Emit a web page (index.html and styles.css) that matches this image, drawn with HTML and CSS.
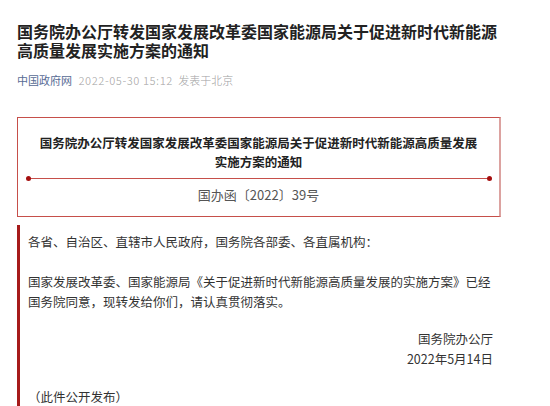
FILE: index.html
```html
<!DOCTYPE html>
<html lang="zh-CN">
<head>
  <meta charset="UTF-8">
  <meta name="viewport" content="width=device-width, initial-scale=1.0">
  <title>国务院办公厅转发国家发展改革委国家能源局关于促进新时代新能源高质量发展实施方案的通知</title>
  <link rel="stylesheet" href="styles.css">
</head>
<body>
  <!-- 文章主体 -->
  <div class="article">
    <h1 class="title">国务院办公厅转发国家发展改革委国家能源局关于促进新时代新能源高质量发展实施方案的通知</h1>

    <!-- 来源、时间、地点 -->
    <div class="meta">
      <span class="source">中国政府网</span>
      <span class="time">2022-05-30 15:12</span>
      <span class="place">发表于北京</span>
    </div>

    <!-- 红框文头 -->
    <div class="doc-head">
      <div class="doc-title">国务院办公厅转发国家发展改革委国家能源局关于促进新时代新能源高质量发展实施方案的通知</div>
      <div class="divider"></div>
      <div class="doc-num">国办函〔2022〕39号</div>
    </div>

    <!-- 正文，左侧红色竖线 -->
    <div class="doc-body">
      <p>各省、自治区、直辖市人民政府，国务院各部委、各直属机构：</p>
      <p>国家发展改革委、国家能源局《关于促进新时代新能源高质量发展的实施方案》已经国务院同意，现转发给你们，请认真贯彻落实。</p>
      <div class="sign">
        <div>国务院办公厅</div>
        <div>2022年5月14日</div>
      </div>
      <p class="note">（此件公开发布）</p>
    </div>
  </div>
</body>
</html>
```

FILE: styles.css
```css
/* 页面基础 */
body {
  margin: 0;
  background: #ffffff;
  font-family: "Noto Sans CJK SC", "Liberation Sans", sans-serif;
  color: #333333;
}

.article {
  width: 484px;
  padding-left: 17px;
}

/* 大标题 */
.title {
  margin: 22px 0 0;
  font-size: 16px;
  line-height: 19px;
  font-weight: bold;
  color: #222222;
}

/* 来源行 */
.meta {
  margin-top: 12px;
  font-size: 11px;
  line-height: 16px;
  color: rgba(0, 0, 0, 0.3);
}

.meta .source {
  color: #576b95;
  margin-right: 4px;
}

.meta .time {
  letter-spacing: 0.5px;
  margin-right: 3px;
}

/* 红框文头 */
.doc-head {
  margin-top: 29px;
  border: 1px solid #c64f4a;
  border-right: 2px solid #dca2a0;
  padding: 15px 0 12px;
  text-align: center;
}

.doc-title {
  padding: 0 20px;
  font-size: 12.5px;
  line-height: 19px;
  font-weight: bold;
  color: #222222;
}

/* 带圆点的红线 */
.divider {
  position: relative;
  height: 1px;
  margin: 7px 9px 0 10px;
  background: #c64f4a;
}

.divider::before,
.divider::after {
  content: "";
  position: absolute;
  top: -2px;
  width: 5px;
  height: 5px;
  border-radius: 50%;
  background: #a50f0f;
}

.divider::before {
  left: -2px;
}

.divider::after {
  right: -2px;
}

.doc-num {
  margin-top: 7px;
  font-size: 13px;
  line-height: 18px;
  color: #555555;
}

/* 正文 */
.doc-body {
  margin-top: 8px;
  border-left: 3px solid #a61b1b;
  padding: 7px 4px 4px 8px;
  font-size: 12.5px;
  line-height: 20px;
  color: #333333;
}

.doc-body p {
  margin: 0 0 20px;
}

.sign {
  margin-top: -3px;
  text-align: right;
  padding-right: 4px;
}

.doc-body .note {
  margin: 18px 0 0;
}
```
